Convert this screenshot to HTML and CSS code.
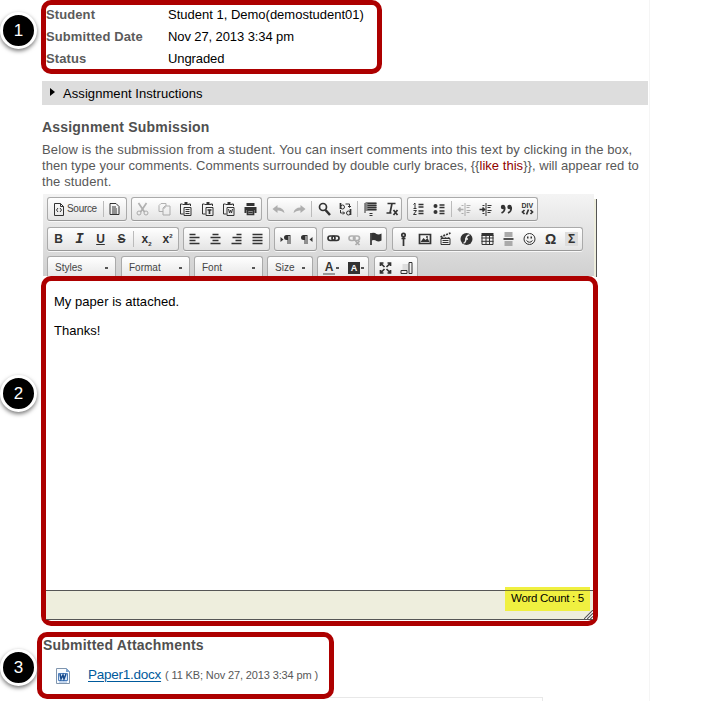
FILE: index.html
```html
<!DOCTYPE html>
<html lang="en">
<head>
<meta charset="utf-8">
<title>Assignment Submission</title>
<link rel="stylesheet" href="styles.css">
</head>
<body>
<main class="page">
  <section class="details callout">
    <dl>
      <dt>Student</dt><dd><span class="name">Student 1, Demo(demostudent01)</span></dd>
      <dt>Submitted Date</dt><dd>Nov 27, 2013 3:34 pm</dd>
      <dt>Status</dt><dd>Ungraded</dd>
    </dl>
    <span class="badge">1</span>
  </section>
  <div class="instructions"><i class="caret"></i>Assignment Instructions</div>
  <h2 class="heading">Assignment Submission</h2>
  <p class="intro"><span class="l1">Below is the submission from a student. You can insert comments into this text by clicking in the box,</span><br><span class="l2">then type your comments. Comments surrounded by double curly braces, {{<em>like this</em>}}, will appear red to</span><br>the student.</p>
  <div class="editor">
    <div class="toolbar">
      <div class="row">
        <div class="group g1">
          <svg viewBox="0 0 16 16"><path class="s" d="M4 2.5h6l3 3v9H4zM10 2.5v3h3M7.5 7L6 9l1.500 2M9.500 7L11 9l-1.500 2"/></svg><span class="src">Source</span><i class="sep"></i>
          <svg viewBox="0 0 16 16"><path class="s" d="M3.500 2.500h6l3 3v8h-9zM5.500 6h4M5.500 8h5M5.500 10h5M5.500 12h5"/></svg>
        </div>
        <div class="group g2">
          <svg class="off" viewBox="0 0 16 16"><path class="s w" d="M4 2l6 9M12 2L6 11"/><circle class="s" cx="4.500" cy="12" r="2"/><circle class="s" cx="11.500" cy="12" r="2"/></svg>
          <svg class="off" viewBox="0 0 16 16"><path class="s" d="M9.500 5V2.500h-5l-2 2v6h4M6.500 7l2-2h5v9h-7zM8.500 5v2h-2"/></svg>
          <svg viewBox="0 0 16 16"><path class="s" d="M5 3H3v10h3M11 3h2v2"/><path d="M5 3h2V1h3v2h2v1H5z"/><path class="s" d="M6.500 6.500h7v8h-7zM8 8.500h4M8 10.500h4M8 12.500h4"/></svg>
          <svg viewBox="0 0 16 16"><path class="s" d="M5 3H3v10h3M11 3h2v2"/><path d="M5 3h2V1h3v2h2v1H5z"/><path class="s" d="M6.500 6.500h7v8h-7z"/><path class="s w" d="M8 9h4M10 9v4"/></svg>
          <svg viewBox="0 0 16 16"><path class="s" d="M5 3H3v10h3M11 3h2v2"/><path d="M5 3h2V1h3v2h2v1H5z"/><path class="s" d="M6.500 6.500h7v8h-7zM8 8l1 4 1-3 1 3 1-4"/></svg>
          <svg viewBox="0 0 16 16"><path d="M4 2h8v3H4zM2 6h12v6h-2V9H4v3H2z"/><path class="s w" d="M5 9.500h6v4H5zM6 11.500h4"/></svg>
        </div>
        <div class="group g3">
          <svg class="off" viewBox="0 0 16 16"><path d="M2 8l5-4v2.500q6 0 7 5.500-3-3-7-2.500V12z"/></svg>
          <svg class="off" viewBox="0 0 16 16"><path d="M14 8L9 4v2.500Q3 6.500 2 12q3-3 7-2.500V12z"/></svg><i class="sep"></i>
          <svg viewBox="0 0 16 16"><circle class="s w" cx="6.500" cy="6" r="3.500"/><path class="s ww" d="M9 9l4.500 5"/></svg>
          <svg viewBox="0 0 16 16"><path class="s w" d="M3 2v6M13 8v6"/><circle class="s" cx="5" cy="6" r="2"/><circle class="s" cx="11" cy="12" r="2"/><path class="s" d="M8 3h4v3M10.500 5L12 6.500 13.500 5M3 9v3h4M5.500 10.500L7 12l-1.500 1.500"/></svg><i class="sep"></i>
          <svg viewBox="0 0 16 16"><path fill="#888" d="M3 1h11v9H3z"/><path class="s" d="M5 2.500h9M5 4.500h9M5 6.500h9M5 8.500h9M2.500 2v10M7 12.500h3M7 14.500h3"/></svg>
          <svg viewBox="0 0 16 16"><path class="s w" d="M4 2.500h8M8.500 2.500L6.500 12M3 12h5"/><path class="s w" d="M10 9l4 5M14 9l-4 5"/></svg>
        </div>
        <div class="group g4">
          <svg viewBox="0 0 16 16"><path class="s" d="M4.500 2v5M3 3.500L4.500 2M3 7.500h3M3 9.500h3l-3 4h3"/><path class="s w" d="M8 3.500h5M8 6h5M8 10h5M8 12.500h5"/></svg>
          <svg viewBox="0 0 16 16"><circle cx="4" cy="5" r="2"/><circle cx="4" cy="11" r="2"/><path class="s w" d="M8 4h5M8 6.500h5M8 10h5M8 12.500h5"/></svg><i class="sep"></i>
          <svg class="off" viewBox="0 0 16 16"><path class="s" d="M8.500 2v13M10 4.500h4M10 6.500h3M10 9.500h4M10 11.500h3M5 4.500h2M5 12.500h2"/><path class="s w" d="M2 8.500h5M4 6.500l-2 2 2 2"/></svg>
          <svg viewBox="0 0 16 16"><path class="s" d="M8.500 2v13M10 4.500h4M10 6.500h3M10 9.500h4M10 11.500h3M5 4.500h2M5 12.500h2"/><path class="s w" d="M2 8.500h5M5 6.500l2 2-2 2"/></svg>
          <svg viewBox="0 0 16 16"><path class="s w" d="M6 6q1 4-3 6M12.500 6q1 4-3 6"/><circle cx="4.500" cy="6" r="2.200"/><circle cx="11" cy="6" r="2.200"/></svg>
          <svg viewBox="0 0 16 16"><text class="div" x="2" y="7">DIV</text><path class="s w" d="M5 9l-2 2 2 2M11 9l2 2-2 2M9 8.500l-2 5"/></svg>
        </div>
      </div>
      <div class="row">
        <div class="group h1">
          <b>B</b><b class="it">I</b><b class="un">U</b><b class="st">S</b><i class="sep"></i><b>x<sub>2</sub></b><b>x<sup>2</sup></b>
        </div>
        <div class="group h2">
          <svg viewBox="0 0 16 16"><path class="s w" d="M3 3.500h6M3 6.500h10M3 9.500h6M3 12.500h10"/></svg>
          <svg viewBox="0 0 16 16"><path class="s w" d="M5 3.500h6M3 6.500h10M5 9.500h6M3 12.500h10"/></svg>
          <svg viewBox="0 0 16 16"><path class="s w" d="M8 3.500h5M4 6.500h9M7 9.500h6M3 12.500h10"/></svg>
          <svg viewBox="0 0 16 16"><path class="s w" d="M3 3.500h10M3 6.500h10M3 9.500h10M3 12.500h10"/></svg>
        </div>
        <div class="group h3">
          <svg viewBox="0 0 16 16"><path d="M3 6l3 2.500L3 11z"/><path d="M13 4H9a2 2 0 0 0 0 5h1v4h1V5h1v8h1z"/></svg>
          <svg viewBox="0 0 16 16"><path d="M14 6l-3 2.500 3 2.500z"/><path d="M9 4H5a2 2 0 0 0 0 5h1v4h1V5h1v8h1z"/></svg>
        </div>
        <div class="group h4">
          <svg viewBox="0 0 16 16"><rect class="s w" x="2.500" y="5" width="7" height="4.500" rx="2.200"/><rect class="s w" x="6.500" y="5" width="7" height="4.500" rx="2.200"/></svg>
          <svg class="off" viewBox="0 0 16 16"><rect class="s w" x="2.500" y="5" width="6" height="4.500" rx="2.200"/><rect class="s w" x="7" y="5" width="6" height="4.500" rx="2.200"/><path class="s w" d="M9 10l4 4M13 10l-4 4"/></svg>
          <svg viewBox="0 0 16 16"><path class="s w" d="M3.500 2v12"/><path d="M4 2q3-1 5 1 2 1 5-.5v7q-3 1.500-5 .5-2-1.500-5-.5z"/></svg>
        </div>
        <div class="group h5">
          <svg viewBox="0 0 16 16"><circle class="s w" cx="8" cy="4" r="1.700"/><path class="s w" d="M8 5v10M6 7.500h4"/></svg>
          <svg viewBox="0 0 16 16"><path class="s w" d="M3 3.500h11v9H3z"/><path d="M4 11l3-4 2 2 2-2 2 4z"/><circle cx="10.500" cy="6" r="1"/></svg>
          <svg viewBox="0 0 16 16"><path class="s" d="M3.500 7.500h9v6h-9zM5 9.500h6M5 11.500h6"/><path class="s w" stroke-dasharray="2 1" d="M3 6l10-4M4 7h9"/></svg>
          <svg viewBox="0 0 16 16"><circle cx="8" cy="8" r="6"/><path fill="none" stroke="#eee" stroke-width="1.500" d="M11 4Q8 4 7.500 8T5 12M6.500 8h3"/></svg>
          <svg viewBox="0 0 16 16"><path class="s" d="M2.500 4v9.500h11V4M6.500 4v9M10 4v9M2 7h12M2 10.300h12"/><path d="M2 2h12v3H2z"/></svg>
          <svg viewBox="0 0 16 16"><path fill="#aaa" d="M4 1h8v5H4zM4 10h8v5H4z"/><path class="s w" d="M3 8h10"/></svg>
          <svg viewBox="0 0 16 16"><circle class="s" cx="8" cy="8" r="5.500"/><path d="M5.500 5.500h1.500v2H5.500zM9 5.500h1.500v2H9z"/><path class="s" d="M5 9.500q3 3.500 6 0"/></svg>
          <b class="omega">Ω</b>
          <b class="sigma">Σ</b>
        </div>
      </div>
      <div class="row">
        <div class="group combo k1">Styles<i class="dot"></i></div>
        <div class="group combo k2">Format<i class="dot"></i></div>
        <div class="group combo k3">Font<i class="dot"></i></div>
        <div class="group combo k4">Size<i class="dot"></i></div>
        <div class="group k5"><b class="fore">A</b><i class="dot"></i><b class="back">A</b><i class="dot"></i></div>
        <div class="group k6">
          <svg viewBox="0 0 16 16"><path class="s w" d="M3 6V3h3M3 3l4 4M10 3h3v3M13 3L9 7M3 10v3h3M3 13l4-4M13 10v3h-3M13 13L9 9"/></svg>
          <svg viewBox="0 0 16 16"><path fill="#ddd" d="M4 4h6v6H4z"/><path class="s" d="M2.500 10.500h6v3h-6zM10.500 2.500h3v11h-3z"/></svg>
        </div>
      </div>
    </div>
    <div class="frame callout">
      <div class="content"><p>My paper is attached.</p><p>Thanks!</p></div>
      <div class="status"><span class="count">Word Count : 5</span>
        <svg class="grip" viewBox="0 0 10 10"><path fill="#fff" stroke="none" d="M0 10L10 0v10z"/><path d="M0 10L10 0M3.500 10L10 3.500M7 10l3-3"/></svg>
      </div>
      <span class="badge">2</span>
    </div>
  </div>
  <section class="attachments callout">
    <h2>Submitted Attachments</h2>
    <div class="file">
      <svg viewBox="0 0 15 16"><path fill="#f8fbff" stroke="#8095ad" d="M.5.5h10l3 3v12H.5z"/><path fill="#7ba3d2" d="M10 0v4h4z"/><path fill="#d5e5f7" stroke="#4d7fbd" d="M2.500 5.500h9v7h-9z"/><path fill="none" stroke="#174a8c" stroke-width="1.500" d="M4 6l1 5 2-4 1 4 2-5"/><path stroke="#8fb1dc" d="M3 14h8"/></svg>
      <a>Paper1.docx</a><small>( 11 KB; Nov 27, 2013 3:34 pm )</small>
    </div>
    <span class="badge">3</span>
  </section>
  <div class="next"></div>
</main>
</body>
</html>
```
FILE: styles.css
```css
* { box-sizing: border-box; }
body { margin: 0; background: #fff; font: 13px/22px "Liberation Sans", sans-serif; color: #000; }
.page { width: 650px; height: 701px; padding-left: 42px; border-right: 1px solid #f5f5f5; overflow: hidden; display: flex; flex-direction: column; align-items: flex-start; }
h2, p, dl, dd { margin: 0; }
.callout { position: relative; border: 5px solid #ad0000; border-radius: 10px; }
.badge { position: absolute; width: 37px; height: 37px; border: 3px solid #fff; border-radius: 50%; background: #000; color: #fff; font-size: 17px; line-height: 31px; text-align: center; box-shadow: 0 2px 4px #777; }
.details { width: 341px; height: 74px; margin-left: -1px; }
.details .badge { left: -46px; top: 7px; }
.details dl { display: grid; grid-template-columns: 122px 1fr; grid-auto-rows: 22px; margin-top: -1px; }
dt { font-weight: bold; color: #5b5b5b; letter-spacing: .1px; }
dd { letter-spacing: -.1px; white-space: nowrap; }
.name { letter-spacing: 0; }
.instructions { width: 606px; height: 24px; margin-top: 7px; background: #ddd; line-height: 25px; letter-spacing: .07px; display: flex; align-items: center; }
.caret { border-left: 5px solid #000; border-top: 4px solid transparent; border-bottom: 4px solid transparent; margin: -2px 8px 0; }
.heading, .attachments h2 { font-size: 14px; line-height: 18px; color: #505050; letter-spacing: .2px; }
.heading { margin-top: 13px; }
.intro { margin-top: 6px; color: #585858; line-height: 16px; letter-spacing: .12px; white-space: nowrap; height: 48px; }
.l2 { letter-spacing: .035px; }
.intro em { font-style: normal; color: #900000; }
.editor { width: 556px; margin-top: 4px; background: linear-gradient(#555, #555) 554px 5px / 1px 78px no-repeat, linear-gradient(#eeeedd, #eeeedd) 552px 5px / 2px 78px no-repeat; }
.toolbar { width: 551px; height: 82px; margin-left: 1px; padding: 3px 0 0 4px; background: linear-gradient(#f4f4f4, #d0d0d0); overflow: hidden; }
.row { display: flex; height: 24px; margin-bottom: 6px; }
.row + .row { margin-bottom: 5px; }
.group { height: 24px; border: 1px solid #aaa; border-bottom-color: #999; border-radius: 3px; background: linear-gradient(#fff, #e4e4e4); box-shadow: 0 1px 0 #f8f8f8; display: flex; align-items: center; flex: none; }
.group svg { width: 17px; height: 16px; margin: 0 2px; flex: none; fill: #333; }
.s { fill: none; stroke: #333; stroke-width: 1; }
.w { stroke-width: 1.7; }
.ww { stroke-width: 2.5; }
.group svg.off { opacity: .35; }
.sep { width: 1px; height: 16px; margin: 0 2px 0 1px; background: #bbb; flex: none; }
.g1 { width: 80px; margin-right: 4px; }
.src { font-size: 10px; letter-spacing: -.3px; color: #444; width: 35px; margin-left: -2px; }
.g1 .sep { margin-left: 1px; margin-right: 0; }
.g2 { width: 131px; margin-right: 5px; justify-content: space-between; }
.g3 { width: 135px; margin-right: 5px; }
.g4 { width: 131px; }
.div { font-size: 7px; font-weight: bold; }
.group b { width: 21px; font-size: 12px; text-align: center; color: #333; line-height: 20px; white-space: nowrap; flex: none; }
.group .it { font-family: "Liberation Mono", monospace; font-style: italic; font-size: 14px; }
.un { text-decoration: underline; }
.st { text-decoration: line-through; }
sub, sup { font-size: 6px; line-height: 0; }
.h1 { width: 132px; margin-right: 4px; }
.h2 { width: 87px; margin-right: 4px; }
.h3 { width: 43px; margin-right: 5px; }
.h4 { width: 65px; margin-right: 5px; }
.h5 { width: 191px; }
.group .omega { font-size: 14px; }
.group .sigma { width: 13px; margin-left: 4px; background: #ddd; line-height: 14px; }
.combo { font-size: 10px; color: #444; padding: 0 7px; justify-content: space-between; }
.dot { width: 3px; height: 2px; background: #555; flex: none; }
.k1 { width: 69px; margin-right: 5px; }
.k2 { width: 69px; margin-right: 4px; }
.k3 { width: 69px; margin-right: 4px; }
.k4 { width: 46px; margin-right: 4px; }
.k5 { width: 52px; margin-right: 5px; }
.k6 { width: 44px; }
.group .fore { width: 12px; margin: 0 1px 0 5px; line-height: 12px; border-bottom: 2px solid #999; }
.group .back { width: 12px; height: 12px; margin: 0 1px 0 9px; line-height: 12px; background: #333; font-size: 9px; color: #fff; }
.frame { width: 557px; height: 350px; margin-left: -1px; background: #fff; }
.frame .badge { left: -46px; top: 94px; }
.content { height: 308px; padding: 10px 8px; }
.content p { margin-bottom: 7px; letter-spacing: .04px; }
.status { position: relative; height: 30px; margin-top: 1px; border-top: 1px solid #555; border-bottom: 1px solid #555; background: #eeeedd; }
.count { position: absolute; right: 3px; top: -4px; width: 85px; height: 24px; background: linear-gradient(#77772a, #77772a) 0 3px / 100% 1px no-repeat #f0f040; font-size: 11.5px; line-height: 23px; text-align: center; white-space: nowrap; letter-spacing: -.3px; }
.grip { position: absolute; right: 0; bottom: 0; width: 9px; height: 9px; stroke: #555; stroke-width: 1.200; }
.attachments { width: 297px; height: 67px; margin: 6px 0 0 -5px; }
.attachments .badge { left: -42px; top: 12px; }
.attachments h2 { margin: 0 0 0 1px; line-height: 17px; }
.file { display: flex; align-items: center; height: 22px; margin: 9px 0 0 14px; white-space: nowrap; }
.file svg { width: 15px; height: 16px; margin: 3px 17px 0 0; }
.file a { color: #005a9c; text-decoration: underline; text-underline-offset: 2px; font-size: 13.5px; letter-spacing: -.25px; margin-top: 1px; }
.file small { color: #585858; font-size: 11px; letter-spacing: -.13px; margin: 2px 0 0 4px; }
.next { width: 501px; height: 4px; margin-top: -2px; border-top: 1px solid #e8e8e8; border-right: 1px solid #e8e8e8; position: relative; z-index: -1; }
```
